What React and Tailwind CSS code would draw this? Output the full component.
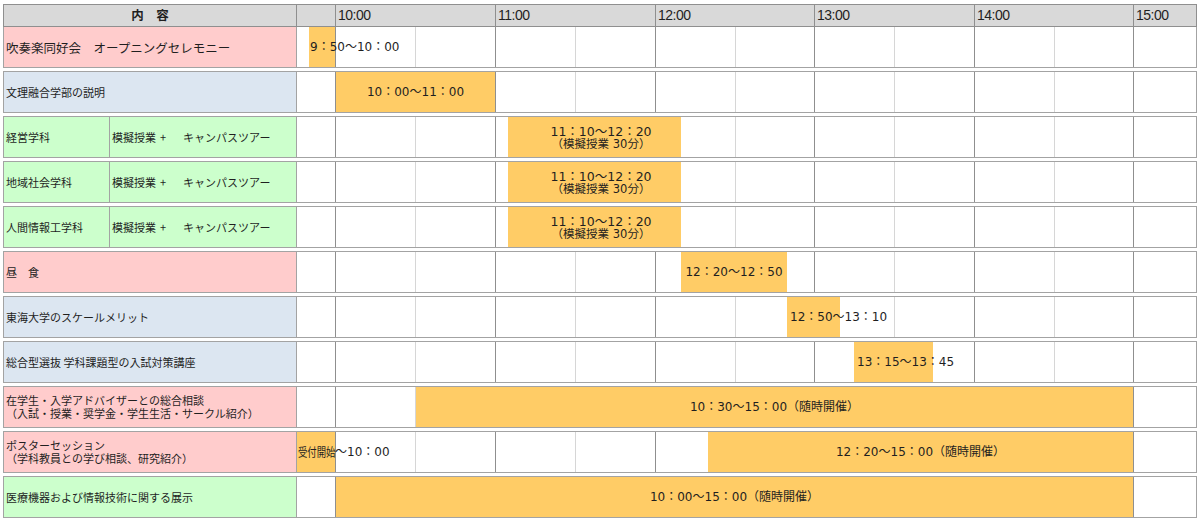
import React from "react";

const CJK = "font-['Noto_Sans_CJK_JP',sans-serif]";
const NUM = "font-['DejaVu_Sans','Noto_Sans_CJK_JP',sans-serif]";

function Grid() {
  return (
    <div className="absolute inset-0 flex">
      <div className="w-[39px] shrink-0 border-r border-[#8f8f8f]" />
      <div className="w-[80px] shrink-0 border-r border-[#d6d6d6]" />
      <div className="w-[80px] shrink-0 border-r border-[#8f8f8f]" />
      <div className="w-[80px] shrink-0 border-r border-[#d6d6d6]" />
      <div className="w-[80px] shrink-0 border-r border-[#8f8f8f]" />
      <div className="w-[80px] shrink-0 border-r border-[#d6d6d6]" />
      <div className="w-[79px] shrink-0 border-r border-[#8f8f8f]" />
      <div className="w-[80px] shrink-0 border-r border-[#d6d6d6]" />
      <div className="w-[80px] shrink-0 border-r border-[#8f8f8f]" />
      <div className="w-[80px] shrink-0 border-r border-[#d6d6d6]" />
      <div className="w-[79px] shrink-0 border-r border-[#8f8f8f]" />
      <div className="w-[62px] shrink-0" />
    </div>
  );
}

function Row({ first, label, children }) {
  return (
    <div
      className={
        first
          ? "flex h-[41px] border-x border-b border-[#a3a3a3]"
          : "mt-[3px] flex h-[42px] border border-[#a3a3a3]"
      }
    >
      {label}
      <div className="relative w-[899px] shrink-0 bg-white">
        <Grid />
        {children}
      </div>
    </div>
  );
}

function Label({ bg, children, big }) {
  return (
    <div
      className={`flex w-[293px] shrink-0 items-center border-r border-[#a3a3a3] pl-[2px] ${bg} ${CJK} ${
        big ? "text-[12.5px]" : "text-[11px]"
      } leading-[13px] text-[#1f1f1f] whitespace-nowrap`}
    >
      <div>{children}</div>
    </div>
  );
}

function SplitLabel({ a }) {
  return (
    <div className={`flex w-[293px] shrink-0 border-r border-[#a3a3a3] bg-[#ccffcc] ${CJK} text-[11px] text-[#1f1f1f] whitespace-nowrap`}>
      <div className="flex w-[106px] shrink-0 items-center border-r border-[#a3a3a3] pl-[2px]">{a}</div>
      <div className="flex items-center pl-[2px]">
        模擬授業<span className="ml-[4px] mr-[17px]">+</span>キャンパスツアー
      </div>
    </div>
  );
}

function ClassBar() {
  return (
    <>
      <div className="absolute top-0 bottom-0 left-[211px] w-[173px] bg-[#ffcc66]" />
      <div className={`absolute top-0 bottom-0 left-[198px] w-[212px] flex flex-col items-center justify-center ${NUM} text-[#1f1f1f]`}>
        <div className="text-[12.5px] leading-[13px]">11：10～12：20</div>
        <div className="text-[11.5px] leading-[12px]">（模擬授業 30分）</div>
      </div>
    </>
  );
}

const T = `absolute top-0 bottom-0 flex items-center whitespace-nowrap ${NUM} text-[12px] text-[#1f1f1f]`;

export default function App() {
  return (
    <div className="h-[522px] w-[1200px] bg-white pl-[3px] pt-[4px]">
      <div className="w-[1194px]">
        {/* header */}
        <div className="flex h-[23px] border border-[#8f8f8f] bg-[#d9d9d9] text-[#1f1f1f]">
          <div className={`flex w-[293px] shrink-0 items-center justify-center border-r border-[#8f8f8f] ${CJK} text-[12.5px] font-bold`}>
            内　容
          </div>
          <div className="w-[39px] shrink-0 border-r border-[#8f8f8f]" />
          <div className="flex w-[160px] shrink-0 items-center border-r border-[#8f8f8f] pl-[2px] font-['Liberation_Sans',sans-serif] text-[14px] tracking-[-0.5px]">10:00</div>
          <div className="flex w-[160px] shrink-0 items-center border-r border-[#8f8f8f] pl-[2px] font-['Liberation_Sans',sans-serif] text-[14px] tracking-[-0.5px]">11:00</div>
          <div className="flex w-[159px] shrink-0 items-center border-r border-[#8f8f8f] pl-[2px] font-['Liberation_Sans',sans-serif] text-[14px] tracking-[-0.5px]">12:00</div>
          <div className="flex w-[160px] shrink-0 items-center border-r border-[#8f8f8f] pl-[2px] font-['Liberation_Sans',sans-serif] text-[14px] tracking-[-0.5px]">13:00</div>
          <div className="flex w-[159px] shrink-0 items-center border-r border-[#8f8f8f] pl-[2px] font-['Liberation_Sans',sans-serif] text-[14px] tracking-[-0.5px]">14:00</div>
          <div className="flex w-[62px] shrink-0 items-center pl-[2px] font-['Liberation_Sans',sans-serif] text-[14px] tracking-[-0.5px]">15:00</div>
        </div>

        <Row first label={<Label bg="bg-[#ffcccc]" big>吹奏楽同好会　オープニングセレモニー</Label>}>
          <div className="absolute top-0 bottom-0 left-[12px] w-[26px] bg-[#ffcc66]" />
          <div className={`${T} left-[13px] text-[12.5px]`}>9：50～10：00</div>
        </Row>

        <Row label={<Label bg="bg-[#dce6f1]">文理融合学部の説明</Label>}>
          <div className={`${T} left-[39px] w-[159px] justify-center bg-[#ffcc66]`}>10：00～11：00</div>
        </Row>

        <Row label={<SplitLabel a="経営学科" />}>
          <ClassBar />
        </Row>
        <Row label={<SplitLabel a="地域社会学科" />}>
          <ClassBar />
        </Row>
        <Row label={<SplitLabel a="人間情報工学科" />}>
          <ClassBar />
        </Row>

        <Row label={<Label bg="bg-[#ffcccc]">昼　食</Label>}>
          <div className={`${T} left-[384px] w-[106px] justify-center bg-[#ffcc66]`}>12：20～12：50</div>
        </Row>

        <Row label={<Label bg="bg-[#dce6f1]">東海大学のスケールメリット</Label>}>
          <div className="absolute top-0 bottom-0 left-[490px] w-[53px] bg-[#ffcc66]" />
          <div className={`${T} left-[493px]`}>12：50～13：10</div>
        </Row>

        <Row label={<Label bg="bg-[#dce6f1]">総合型選抜 学科課題型の入試対策講座</Label>}>
          <div className="absolute top-0 bottom-0 left-[557px] w-[79px] bg-[#ffcc66]" />
          <div className={`${T} left-[560px]`}>13：15～13：45</div>
        </Row>

        <Row
          label={
            <Label bg="bg-[#ffcccc]">
              在学生・入学アドバイザーとの総合相談
              <br />
              　（入試・授業・奨学金・学生生活・サークル紹介）
            </Label>
          }
        >
          <div className={`${T} left-[119px] w-[717px] justify-center bg-[#ffcc66]`}>10：30～15：00（随時開催）</div>
        </Row>

        <Row
          label={
            <Label bg="bg-[#ffcccc]">
              ポスターセッション
              <br />
              （学科教員との学び相談、研究紹介）
            </Label>
          }
        >
          <div className="absolute top-0 bottom-0 left-0 w-[38px] bg-[#ffcc66]" />
          <div className={`${T} left-[1px]`}>
            <span className="inline-block w-[37px] overflow-visible">
              <span className={`inline-block origin-left scale-x-[0.78] ${CJK} text-[12px]`}>受付開始</span>
            </span>
            ～10：00
          </div>
          <div className={`${T} left-[411px] w-[425px] justify-center bg-[#ffcc66]`}>12：20～15：00（随時開催）</div>
        </Row>

        <Row label={<Label bg="bg-[#ccffcc]">医療機器および情報技術に関する展示</Label>}>
          <div className={`${T} left-[39px] w-[797px] justify-center bg-[#ffcc66]`}>10：00～15：00（随時開催）</div>
        </Row>
      </div>
    </div>
  );
}
